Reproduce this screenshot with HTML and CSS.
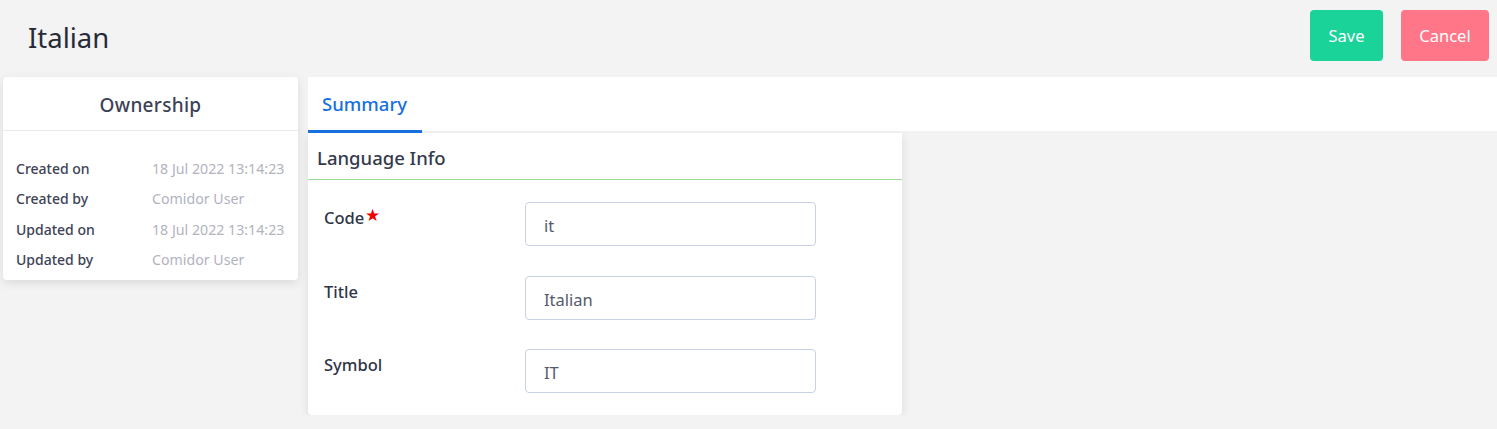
FILE: index.html
```html
<!doctype html>
<html lang="en">
<head>
    <title>Italian</title>
    <link rel="stylesheet" href="styles.css">
</head>
<body>
    <div class="topbar">
        <h1 class="page-title">Italian</h1>
        <div class="actions">
            <button class="btn btn-save">Save</button>
            <button class="btn btn-cancel">Cancel</button>
        </div>
    </div>

    <div class="main">
        <div class="ownership card">
            <div class="ownership-head">Ownership</div>
            <div class="ownership-body">
                <div class="own-row"><span class="own-label">Created on</span><span class="own-value">18 Jul 2022 13:14:23</span></div>
                <div class="own-row"><span class="own-label">Created by</span><span class="own-value">Comidor User</span></div>
                <div class="own-row"><span class="own-label">Updated on</span><span class="own-value">18 Jul 2022 13:14:23</span></div>
                <div class="own-row"><span class="own-label">Updated by</span><span class="own-value">Comidor User</span></div>
            </div>
        </div>

        <div class="content">
            <div class="tabs">
                <div class="tab active">Summary</div>
            </div>
            <div class="info card">
                <div class="info-head">Language Info</div>
                <div class="info-body">
                    <div class="field">
                        <label class="field-label">Code<span class="req">&#9733;</span></label>
                        <input class="field-input" type="text" value="it">
                    </div>
                    <div class="field">
                        <label class="field-label">Title</label>
                        <input class="field-input" type="text" value="Italian">
                    </div>
                    <div class="field">
                        <label class="field-label">Symbol</label>
                        <input class="field-input" type="text" value="IT">
                    </div>
                </div>
            </div>
        </div>
    </div>
</body>
</html>
```

FILE: styles.css
```css
body {
    margin: 0;
    background: #f3f3f3;
    font-family: "Noto Sans", "Open Sans", sans-serif;
    color: #3a3f51;
}
.topbar {
    display: flex;
    justify-content: space-between;
    align-items: flex-start;
    padding: 10px 8px 0 28px;
    height: 67px;
}
.page-title {
    margin: 0;
    font-size: 27.5px;
    font-weight: 400;
    line-height: 56px;
    color: #272b38;
}
.actions {
    display: flex;
    gap: 18px;
}
.btn {
    border: none;
    border-radius: 4px;
    height: 51px;
    padding: 0 10px;
    font-family: inherit;
    font-size: 16.5px;
    color: #fff;
}
.btn-save {
    background: #19d399;
    width: 73px;
}
.btn-cancel {
    background: #ff7689;
    width: 88px;
}
.main {
    display: flex;
    align-items: flex-start;
    gap: 10px;
    padding-left: 3px;
}
.card {
    background: #fff;
    border-radius: 4px;
    box-shadow: 0 3px 10px rgba(0, 0, 0, 0.1);
}
.ownership {
    width: 295px;
    padding-bottom: 5px;
}
.ownership-head {
    text-align: center;
    font-size: 19px;
    font-weight: 500;
    letter-spacing: 0.3px;
    height: 53px;
    line-height: 56px;
    border-bottom: 1px solid #ebebef;
    color: #3d4256;
}
.ownership-body {
    padding: 22px 0 0 13px;
}
.own-row {
    display: flex;
    height: 30.5px;
    align-items: center;
    font-size: 14px;
}
.own-label {
    width: 136px;
    font-weight: 500;
    color: #3d4256;
}
.own-value {
    color: #b2b3bf;
    font-size: 14.2px;
}
.content {
    flex: 1;
}
.tabs {
    background: #fff;
    height: 54px;
    display: flex;
}
.tab {
    width: 114px;
    box-sizing: border-box;
    padding-left: 14px;
    font-size: 18.5px;
    font-weight: 500;
    line-height: 54px;
}
.tab.active {
    color: #1670e0;
    border-bottom: 3px solid #1670e0;
    height: 56px;
}
.info {
    width: 594px;
    margin-top: 2px;
    border-radius: 0 0 4px 4px;
}
.info-head {
    height: 46px;
    line-height: 49px;
    padding-left: 9px;
    font-size: 18.5px;
    font-weight: 500;
    border-bottom: 1px solid #9fdc9b;
    color: #353a4c;
}
.info-body {
    padding: 22px 0 22px 16px;
    display: flex;
    flex-direction: column;
    gap: 29.5px;
}
.field {
    display: flex;
    align-items: flex-start;
}
.field-label {
    width: 201px;
    font-size: 16.5px;
    font-weight: 500;
    line-height: 24px;
    padding-top: 4px;
    color: #2f3447;
}
.req {
    display: inline-block;
    vertical-align: top;
    color: #f00000;
    font-size: 17px;
    line-height: 17px;
    margin-left: 1px;
}
.field-input {
    width: 291px;
    height: 44px;
    box-sizing: border-box;
    border: 1px solid #c8d2e4;
    border-radius: 4px;
    padding: 3px 18px 0;
    font-family: inherit;
    font-size: 16.5px;
    color: #555a6d;
    outline: none;
}
```
